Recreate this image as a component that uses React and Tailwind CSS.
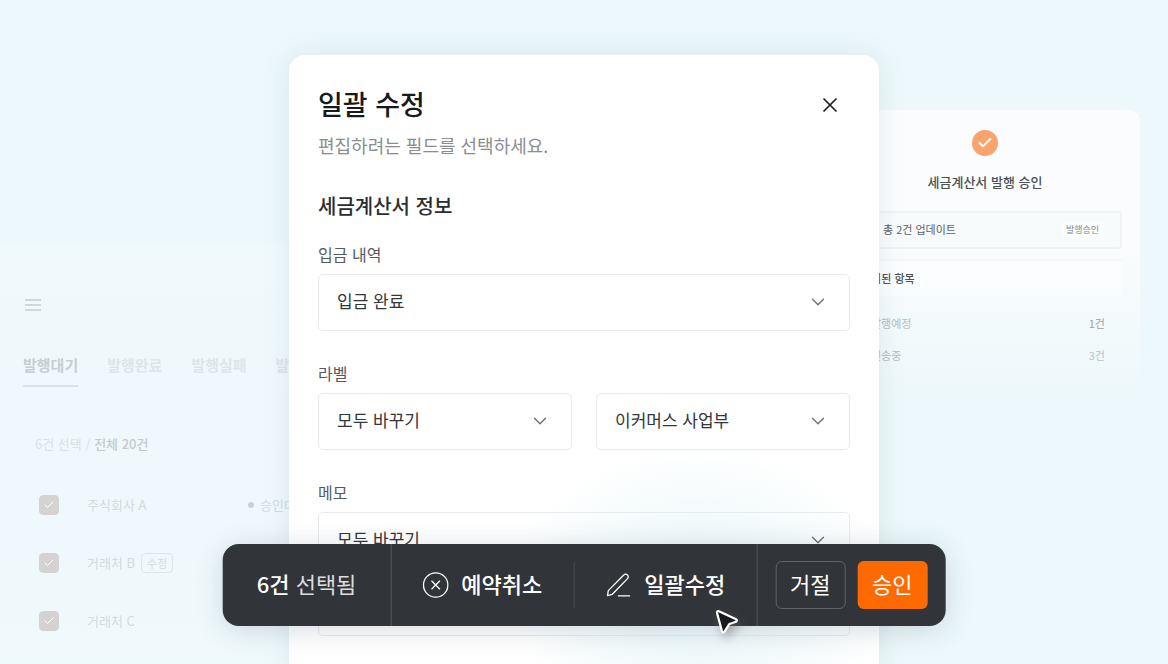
import { useState } from "react";
import { Check, ChevronDown } from "lucide-react";

const TABS = ["발행대기", "발행완료", "발행실패", "발행"];

const CLIENTS = [
  { id: 1, name: "주식회사 A", status: "승인대기" },
  { id: 2, name: "거래처 B", tag: "수정" },
  { id: 3, name: "거래처 C" },
];

const RESULTS = [
  { label: "발행예정", count: "1건", tone: "text-[#9ba0a5]" },
  { label: "전송중", count: "3건", tone: "text-[#bcc2c6]" },
];

/* ================= ICONS ================= */
function MenuIcon() {
  return (
    <svg width="18" height="18" viewBox="0 0 18 18" fill="none" stroke="currentColor" strokeWidth="1.8">
      <path d="M2 4h16M2 9h16M2 14h16" />
    </svg>
  );
}

function CloseIcon() {
  return (
    <svg width="28" height="28" viewBox="0 0 28 28" fill="none" stroke="currentColor" strokeWidth="1.7">
      <path d="M7.5 7.5l13 13M20.5 7.5l-13 13" />
    </svg>
  );
}

function CancelIcon() {
  return (
    <svg width="26" height="26" viewBox="0 0 26 26" fill="none" stroke="currentColor" strokeWidth="1.3">
      <circle cx="13" cy="13" r="12.2" />
      <path d="M8.8 8.8l8.4 8.4M17.2 8.8l-8.4 8.4" />
    </svg>
  );
}

function PencilIcon() {
  return (
    <svg
      width="26"
      height="26"
      viewBox="0 0 26 26"
      fill="none"
      stroke="currentColor"
      strokeWidth="1.3"
      strokeLinejoin="round"
    >
      <path d="M1.8 23.6l.8-5L17.8 3.2c1.2-1.2 2.9-1.3 4-.3 1.1 1.1 1 2.8-.2 4L6.6 22.3z" />
      <path d="M12.2 23.8h12.2" />
    </svg>
  );
}

function CursorIcon() {
  return (
    <svg
      width="28"
      height="28"
      viewBox="0 0 28 28"
      className="drop-shadow-[3px_5px_5px_rgba(120,110,105,0.55)]"
    >
      <path
        d="M4.2 3.2L21.4 11.3c1.2.6 1 2.2-.2 2.5l-6.6 2.2-5 7.8c-.6 1-2.100.7-2.300-.4L2.300 4.900c-.200-1.200.800-2.200 1.900-1.700z"
        fill="#17191c"
        stroke="#fff"
        strokeWidth="2.200"
        strokeLinejoin="round"
      />
    </svg>
  );
}

/* ================= FIELDS ================= */
function SelectBox({ id, label, options }) {
  return (
    <div className="relative min-w-0 flex-1">
      <select
        id={id}
        aria-label={label}
        className="block h-[57px] w-full appearance-none rounded-[5px] border border-[#e6ebef] bg-transparent pr-12 pb-[3px] pl-[18px] text-[17px] text-[#33363a]"
      >
        {options.map((o) => (
          <option key={o}>{o}</option>
        ))}
      </select>
      <ChevronDown
        size={22}
        strokeWidth={1.5}
        className="pointer-events-none absolute top-[17px] right-[21px] text-[#6d7175]"
      />
    </div>
  );
}

function FieldLabel({ htmlFor, children }) {
  return (
    <label htmlFor={htmlFor} className="mb-2 block text-base leading-6 text-[#55595d]">
      {children}
    </label>
  );
}

/* ================= LIST ================= */
function InvoiceList() {
  const [tab, setTab] = useState(TABS[0]);

  return (
    <section className="mt-[244px] min-w-0 overflow-hidden bg-linear-to-b from-[#effafc] via-[#eff8fd] to-[#effafc] pt-[52px] pl-[23px] whitespace-nowrap">
      <button type="button" aria-label="메뉴" className="block text-[#cfd7da]">
        <MenuIcon />
      </button>

      <div className="mt-[39px] flex gap-[29px]">
        {TABS.map((t) => (
          <button
            key={t}
            type="button"
            onClick={() => setTab(t)}
            className={
              t === tab
                ? "border-b-2 border-[#dbe3e6] pb-2 text-[15px] leading-6 font-bold text-[#c8cdd1]"
                : "border-b-2 border-transparent pb-2 text-[15px] leading-6 font-bold text-[#dde5e9]"
            }
          >
            {t}
          </button>
        ))}
      </div>

      <p className="mt-[47px] ml-3 text-[13px] leading-5 text-[#d9e1e4]">
        6건 선택 / <b className="font-medium text-[#c4cacd]">전체 20건</b>
      </p>

      <ul className="mt-[22px]">
        {CLIENTS.map((c) => (
          <li key={c.id} className="flex h-[58px] items-center pl-4 text-[13px] text-[#d2dadd]">
            <label className="flex w-[209px] shrink-0 items-center">
              <span className="mr-7 grid place-items-center">
                <input
                  type="checkbox"
                  defaultChecked
                  className="peer col-start-1 row-start-1 size-5 appearance-none rounded border border-[#d5d3d2] checked:bg-[#d5d3d2]"
                />
                <Check
                  size={12}
                  className="pointer-events-none invisible col-start-1 row-start-1 text-white peer-checked:visible"
                />
              </span>
              {c.name}
              {c.tag && (
                <span className="ml-[6px] rounded border border-[#dfe6e9] px-[5px] text-[11px] leading-[18px]">
                  {c.tag}
                </span>
              )}
            </label>
            {c.status && (
              <span className="flex items-center gap-[6px]">
                <i className="size-[6px] rounded-full bg-[#cbd2d6]" />
                {c.status}
              </span>
            )}
          </li>
        ))}
      </ul>
    </section>
  );
}

/* ================= DIALOG ================= */
function BulkEditDialog() {
  return (
    <section
      role="dialog"
      aria-labelledby="dialog-title"
      className="relative z-10 mt-[55px] min-w-0 rounded-t-2xl bg-white bg-[radial-gradient(ellipse_190px_150px_at_410px_540px,#e6f5f8,#ffffff00)] px-[29px] pt-[31px] pb-10 shadow-[0_0_28px_rgba(100,120,140,0.13)]"
    >
      <header className="flex items-start justify-between">
        <div>
          <h1 id="dialog-title" className="text-[27px] leading-9 font-medium text-[#17191c]">
            일괄 수정
          </h1>
          <p className="mt-[10px] text-lg leading-[26px] text-[#8b8d8f]">편집하려는 필드를 선택하세요.</p>
        </div>
        <button type="button" aria-label="닫기" className="mt-[5px] mr-[6px] text-[#1c1e20]">
          <CloseIcon />
        </button>
      </header>

      <h2 className="mt-[34px] text-xl leading-7 font-medium text-[#2b2e31]">세금계산서 정보</h2>

      <form className="mt-[22px] flex flex-col gap-[30px]">
        <div>
          <FieldLabel htmlFor="deposit">입금 내역</FieldLabel>
          <SelectBox id="deposit" options={["입금 완료", "입금 대기"]} />
        </div>

        <div>
          <FieldLabel htmlFor="label-mode">라벨</FieldLabel>
          <div className="flex gap-6">
            <SelectBox id="label-mode" options={["모두 바꾸기", "추가하기"]} />
            <SelectBox id="label-value" label="라벨 값" options={["이커머스 사업부"]} />
          </div>
        </div>

        <div>
          <FieldLabel htmlFor="memo-mode">메모</FieldLabel>
          <SelectBox id="memo-mode" options={["모두 바꾸기", "추가하기"]} />
          <textarea
            aria-label="메모 내용"
            className="mt-[10px] block h-[57px] w-full resize-none rounded-[5px] border border-[#e6ebef] bg-transparent px-[18px] py-4 text-[17px]"
          />
        </div>
      </form>
    </section>
  );
}

/* ================= RESULT CARD ================= */
function ApprovalCard() {
  return (
    <section className="mt-[110px] mr-7 -ml-[49px] self-start rounded-xl bg-linear-to-b from-[#fafcfd] from-45% to-[#fafcfd]/0 to-95% px-[18px] pt-5 pb-12">
      <div className="mx-auto grid size-[26px] place-items-center rounded-full bg-[#f9a46c] text-white">
        <Check size={16} strokeWidth={3} />
      </div>
      <h2 className="mt-4 text-center text-[13px] leading-5 font-medium text-[#4c5055]">
        세금계산서 발행 승인
      </h2>

      <div className="mt-[19px] flex h-[38px] items-center justify-between rounded-sm border-2 border-[#edf3f6] bg-[#f8fbfc] pr-[17px] pb-px pl-[33px]">
        <span className="text-[11px] text-[#5d6166]">총 2건 업데이트</span>
        <span className="rounded bg-[#fcfdfe] px-1 text-[9px] leading-4 text-[#85898e]">발행승인</span>
      </div>

      <div className="mt-[10px] border-t-2 border-[#f2f7f9] bg-linear-to-b from-[#fcfdfe] to-[#fafdfe] pl-[13px] text-[11px] leading-[35px] font-medium text-[#4c5055]">
        처리된 항목
      </div>

      <dl className="mt-[11px] pr-[17px] pl-[23px] text-[11px] leading-8">
        {RESULTS.map((r) => (
          <div key={r.label} className="flex justify-between">
            <dt className="text-[#b5bbbf]">{r.label}</dt>
            <dd className={r.tone}>{r.count}</dd>
          </div>
        ))}
      </dl>
    </section>
  );
}

/* ================= ACTION BAR ================= */
function ActionBar() {
  return (
    <div className="absolute bottom-[38px] left-1/2 z-20 flex h-[82px] -translate-x-1/2 items-stretch rounded-2xl bg-[#313539] text-[22px] whitespace-nowrap text-white shadow-[0_4px_28px_rgba(60,80,100,0.2)]">
      <p className="flex items-center border-r border-[#53575b] px-[34px] pb-1 text-[#dddcdc]">
        <span>
          <span className="font-medium text-white">6건</span> 선택됨
        </span>
      </p>
      <button type="button" className="flex items-center gap-[13px] px-[31px] font-medium">
        <CancelIcon />
        <span className="pb-1">예약취소</span>
      </button>
      <span className="h-[46px] w-px self-center bg-[#484c50]" />
      <button type="button" className="relative flex items-center gap-[13px] px-[31px] font-medium">
        <PencilIcon />
        <span className="pb-1">일괄수정</span>
        <span className="pointer-events-none absolute right-[14px] -bottom-[10px]">
          <CursorIcon />
        </span>
      </button>
      <div className="flex items-center gap-3 border-l border-[#53575b] px-[18px]">
        <button type="button" className="h-12 w-[70px] rounded-md border border-[#5f6367] pb-1">
          거절
        </button>
        <button type="button" className="h-12 w-[70px] rounded-md bg-[#ff6a00] pb-1">
          승인
        </button>
      </div>
    </div>
  );
}

export default function App() {
  return (
    <main
      lang="ko"
      className="relative h-screen overflow-hidden bg-[#ecf8fb] font-['Noto_Sans_CJK_KR',sans-serif]"
    >
      <div className="grid min-h-full grid-cols-[minmax(0,1fr)_590px_minmax(0,1fr)]">
        <InvoiceList />
        <BulkEditDialog />
        <ApprovalCard />
      </div>
      <ActionBar />
    </main>
  );
}
